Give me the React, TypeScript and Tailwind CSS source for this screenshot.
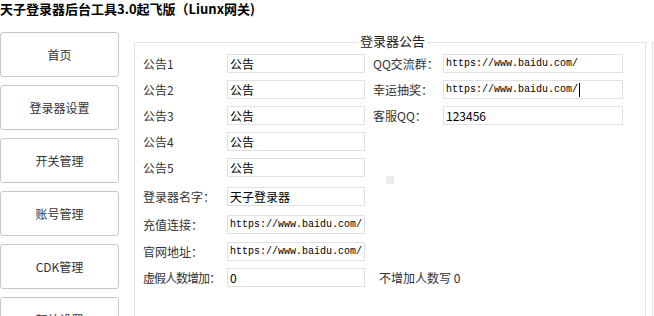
import React from 'react';

const cjk = "font-['Noto_Sans_CJK_SC','Microsoft_YaHei',sans-serif]";
const mono = "font-['Liberation_Mono','Noto_Sans_CJK_SC',monospace]";

const navItems = ['首页', '登录器设置', '开关管理', '账号管理', 'CDK管理', '额外设置'];

interface RowProps {
  label: string;
  value: string;
  isUrl?: boolean;
  mt: string;
  tight?: boolean;
}

const leftRows: RowProps[] = [
  { label: '公告1', value: '公告', mt: 'mt-0' },
  { label: '公告2', value: '公告', mt: 'mt-[7px]' },
  { label: '公告3', value: '公告', mt: 'mt-[7px]' },
  { label: '公告4', value: '公告', mt: 'mt-[7px]' },
  { label: '公告5', value: '公告', mt: 'mt-[7px]' },
  { label: '登录器名字：', value: '天子登录器', mt: 'mt-[10px]' },
  { label: '充值连接：', value: 'https://www.baidu.com/', isUrl: true, mt: 'mt-[9px]' },
  { label: '官网地址：', value: 'https://www.baidu.com/', isUrl: true, mt: 'mt-[8px]' },
  { label: '虚假人数增加：', value: '0', mt: 'mt-[7px]', tight: true },
];

const FieldText: React.FC<{ value: string; isUrl?: boolean; caret?: boolean }> = ({ value, isUrl, caret }) => (
  <span className={`flex items-center pl-[2px] whitespace-nowrap overflow-hidden text-black ${isUrl ? `${mono} text-[10px]` : `${cjk} text-[12px]`}`}>
    {value}
    {caret && <span className="inline-block w-px h-[14px] bg-black ml-px"></span>}
  </span>
);

export default function App() {
  return (
    <div className={`w-[654px] h-[316px] bg-white overflow-hidden ${cjk}`}>
      <div className="h-[20px] text-[13px] font-bold leading-[17px] text-black whitespace-nowrap">
        天子登录器后台工具3.0起飞版（Liunx网关)
      </div>

      <div className="flex mt-[12px]">
        <div className="w-[119px] flex flex-col gap-[8px] shrink-0">
          {navItems.map((item) => (
            <div
              key={item}
              className="h-[45px] shrink-0 border border-[#c8c8c8] rounded-[3px] bg-white flex items-center justify-center text-[12px] text-[#333]"
            >
              {item}
            </div>
          ))}
        </div>

        <div className="ml-[15px] mt-[10px] w-[512px] h-[300px] shrink-0 border border-[#e3e3e3] relative">
          <span className="absolute left-[223px] top-[-9px] px-[2px] bg-white text-[13px] leading-[14px] text-[#222]">
            登录器公告
          </span>

          <div className="flex pt-[11px] pl-[8px]">
            <div className="flex flex-col w-[222px]">
              {leftRows.map((r) => (
                <div key={r.label} className={`flex h-[19px] items-center ${r.mt}`}>
                  <span className={`w-[84px] text-[12px] text-[#333] whitespace-nowrap overflow-hidden ${r.tight ? 'tracking-[-1px]' : ''}`}>
                    {r.label}
                  </span>
                  <div className="w-[138px] h-[19px] border border-[#e1e1e1] flex items-center">
                    <FieldText value={r.value} isUrl={r.isUrl} />
                  </div>
                </div>
              ))}
            </div>

            <div className="flex flex-col ml-[8px]">
              {[
                { label: 'QQ交流群：', value: 'https://www.baidu.com/', isUrl: true, caret: false, mt: 'mt-0' },
                { label: '幸运抽奖：', value: 'https://www.baidu.com/', isUrl: true, caret: true, mt: 'mt-[7px]' },
                { label: '客服QQ：', value: '123456', isUrl: false, caret: false, mt: 'mt-[7px]' },
              ].map((r) => (
                <div key={r.label} className={`flex h-[19px] items-center ${r.mt}`}>
                  <span className="w-[70px] text-[12px] text-[#333] whitespace-nowrap">{r.label}</span>
                  <div className="w-[180px] h-[19px] border border-[#e1e1e1] flex items-center">
                    <FieldText value={r.value} isUrl={r.isUrl} caret={r.caret} />
                  </div>
                </div>
              ))}
              <div className="w-[8px] h-[8px] bg-[#ececec] ml-[13px] mt-[51px]"></div>
              <div className="flex h-[19px] items-center mt-[84px] ml-[6px] text-[12px] text-[#333] whitespace-nowrap">
                不增加人数写 0
              </div>
            </div>
          </div>
        </div>

        <div className="ml-[6px] mt-[10px] h-[300px] flex-1 border-l border-t border-[#e3e3e3]"></div>
      </div>
    </div>
  );
}
